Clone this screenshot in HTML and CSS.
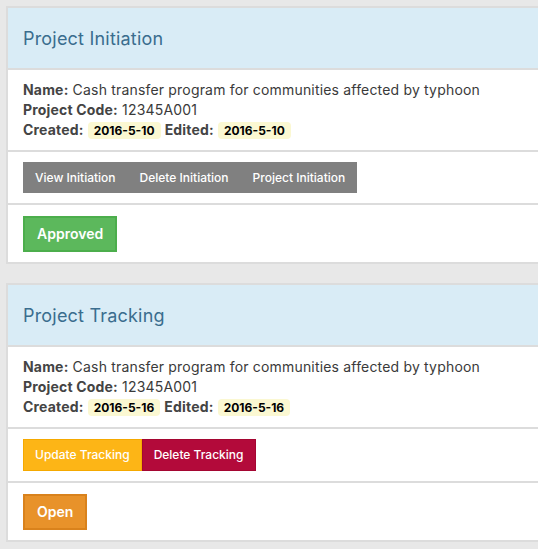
FILE: index.html
```html
<!DOCTYPE html>
<html>
<head>
<meta charset="utf-8">
<link rel="stylesheet" href="styles.css">
</head>
<body>
<div class="page">
  <section class="panel">
    <header class="panel-heading">Project Initiation</header>
    <div class="panel-body info">
      <div><b>Name:</b> Cash transfer program for communities affected by typhoon</div>
      <div><b>Project Code:</b> 12345A001</div>
      <div><b>Created:</b> <span class="date">2016-5-10</span> <b>Edited:</b> <span class="date">2016-5-10</span></div>
    </div>
    <div class="panel-body">
      <div class="btn-group">
        <a class="btn btn-gray">View Initiation</a><a class="btn btn-gray">Delete Initiation</a><a class="btn btn-gray">Project Initiation</a>
      </div>
    </div>
    <div class="panel-body">
      <a class="btn-status btn-green">Approved</a>
    </div>
  </section>

  <section class="panel">
    <header class="panel-heading">Project Tracking</header>
    <div class="panel-body info">
      <div><b>Name:</b> Cash transfer program for communities affected by typhoon</div>
      <div><b>Project Code:</b> 12345A001</div>
      <div><b>Created:</b> <span class="date">2016-5-16</span> <b>Edited:</b> <span class="date">2016-5-16</span></div>
    </div>
    <div class="panel-body">
      <div class="btn-group">
        <a class="btn btn-yellow">Update Tracking</a><a class="btn btn-crimson">Delete Tracking</a>
      </div>
    </div>
    <div class="panel-body">
      <a class="btn-status btn-orange">Open</a>
    </div>
  </section>
</div>
</body>
</html>
```
FILE: styles.css
```css
html, body {
  margin: 0;
  padding: 0;
  overflow: hidden;
  background: #e8e8e8;
}
body {
  font-family: Inter, "Open Sans", sans-serif;
  color: #333;
  font-size: 14px;
}
.page {
  padding: 6px 0 0 6px;
  display: flex;
  flex-direction: column;
  gap: 19px;
}
.panel {
  background: #fff;
  border: 2px solid #dcdcdc;
  border-right: none;
}
.panel-heading {
  background: #d9ecf6;
  height: 60px;
  display: flex;
  align-items: center;
  padding: 0 15px;
  font-size: 18px;
  color: #3a6d8e;
  letter-spacing: 0.2px;
  border-bottom: 2px solid #dcdcdc;
}
.panel-body {
  padding: 10px 15px;
  border-bottom: 2px solid #dcdcdc;
}
.panel-body:last-child {
  border-bottom: none;
}
.info {
  line-height: 20px;
  letter-spacing: 0.18px;
  color: #3a3a3a;
}
.info b {
  font-weight: 700;
  color: #444;
}
.date {
  display: inline-block;
  background: #fbf8d2;
  color: #000;
  font-weight: 700;
  font-size: 12px;
  line-height: 17px;
  padding: 0 6px;
  border-radius: 4px;
  letter-spacing: 0;
}
.btn-group {
  display: flex;
}
.btn {
  display: block;
  color: #fff;
  font-size: 12px;
  font-weight: 500;
  line-height: 31px;
  padding: 0 12px;
}
.btn-gray {
  background: #808080;
}
.btn-yellow {
  background: #fdb516;
  border: 1px solid #f5a900;
  line-height: 30px;
  padding: 0 11px;
}
.btn-crimson {
  background: #b30a3a;
  border: 1px solid #a40632;
  line-height: 30px;
  padding: 0 11px;
}
.btn-status {
  display: inline-block;
  color: #fff;
  font-size: 14px;
  font-weight: 600;
  line-height: 32px;
  padding: 0 12px;
  border: 2px solid;
  margin-top: 1px;
}
.btn-green {
  background: #5cb85c;
  border-color: #4cae4c;
}
.btn-orange {
  background: #e8922a;
  border-color: #d9821c;
}
```
